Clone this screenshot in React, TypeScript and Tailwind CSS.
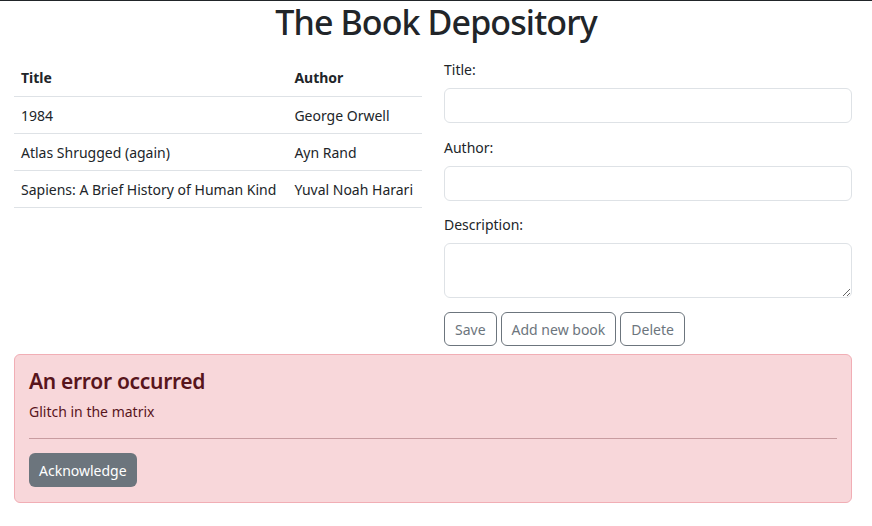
const books = [
  { title: '1984', author: 'George Orwell' },
  { title: 'Atlas Shrugged (again)', author: 'Ayn Rand' },
  { title: 'Sapiens: A Brief History of Human Kind', author: 'Yuval Noah Harari' },
];

export default function App() {
  return (
    <div
      className="min-h-[526px] border-t border-[#212529] bg-white text-[14px] leading-[21px] text-[#212529]"
      style={{ fontFamily: '"Noto Sans", "Open Sans", sans-serif' }}
    >
      <h1 className="py-px text-center text-[34px] leading-[40px] font-medium tracking-[-0.9px]">The Book Depository</h1>

      <div className="mt-4 grid grid-cols-2 gap-[22px] pl-[14px] pr-[20px]">
        {/* Book list */}
        <div>
          <table className="w-full border-collapse text-left">
            <thead>
              <tr className="border-b border-[#dee2e6]">
                <th className="px-[7px] py-2 font-bold">Title</th>
                <th className="px-[7px] py-2 font-bold">Author</th>
              </tr>
            </thead>
            <tbody>
              {books.map((b) => (
                <tr key={b.title} className="border-b border-[#dee2e6]">
                  <td className="px-[7px] py-[7.5px]">{b.title}</td>
                  <td className="px-[7px] py-[7.5px]">{b.author}</td>
                </tr>
              ))}
            </tbody>
          </table>
        </div>

        {/* Edit form */}
        <div>
          <label className="mb-2 block">Title:</label>
          <input className="block h-[35px] w-full rounded-md border border-[#dee2e6] px-3" />
          <label className="mb-2 mt-[14px] block">Author:</label>
          <input className="block h-[35px] w-full rounded-md border border-[#dee2e6] px-3" />
          <label className="mb-2 mt-[13px] block">Description:</label>
          <textarea rows={2} className="block h-[55px] w-full rounded-md border border-[#dee2e6] px-3 py-1.5" />
          <div className="mt-[14px] flex gap-1">
            <button className="h-[34px] rounded-md border border-[#6c757d] px-[10px] text-[#6c757d]">Save</button>
            <button className="h-[34px] rounded-md border border-[#6c757d] px-[10px] text-[#6c757d]">Add new book</button>
            <button className="h-[34px] rounded-md border border-[#6c757d] px-[10px] text-[#6c757d]">Delete</button>
          </div>
        </div>
      </div>

      {/* Error */}
      <div className="ml-[14px] mr-[20px] mt-2 rounded-md border border-[#f1aeb5] bg-[#f8d7da] px-[14px] pb-[15px] pt-[14px] text-[#58151c]">
        <h4 className="mb-[7px] text-[21px] leading-[25px] font-semibold tracking-[-0.3px]">An error occurred</h4>
        <p className="mb-4">Glitch in the matrix</p>
        <hr className="border-t border-[#58151c]/30" />
        <button className="mt-[14px] h-[34px] rounded-md bg-[#6c757d] px-[10px] text-white">Acknowledge</button>
      </div>
    </div>
  );
}
